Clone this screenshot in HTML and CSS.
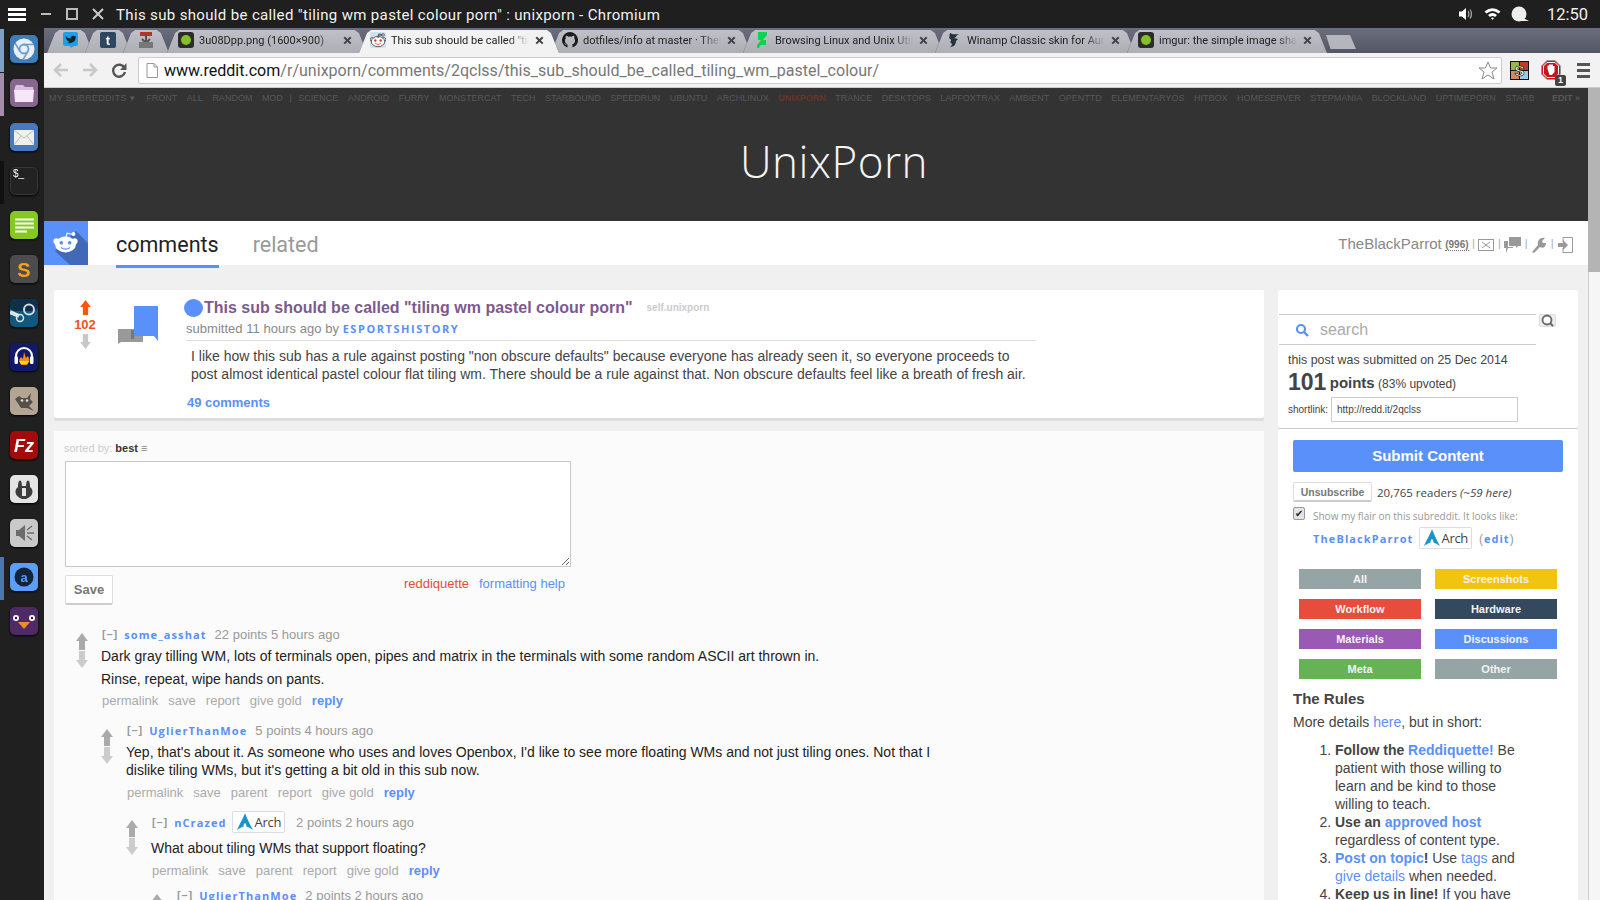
FILE: index.html
```html
<!DOCTYPE html>
<html lang="en">
  <head>
    <meta charset="utf-8">
    <link rel="stylesheet" href="styles.css">
    <title>This sub should be called "tiling wm pastel colour porn" : unixporn - Chromium</title>
  </head>
  <body>
    <svg class="defs" width="0" height="0">
      <symbol id="up" viewBox="0 0 12 17"><path d="M6 0 12 8H9V17H3V8H0Z"/></symbol>
      <symbol id="down" viewBox="0 0 12 17"><path d="M3 0H9V9H12L6 17 0 9H3Z"/></symbol>
      <symbol id="arch" viewBox="0 0 20 20"><path d="M10 0C9 3 7.500 6 1 19 4 17 6.500 15.500 8.500 15 8 10 12 10 11.500 15 13.500 15.500 16 17 19 19 14 10 12 5 10 0Z"/></symbol>
      <symbol id="alien" viewBox="0 0 30 26">
        <circle cx="4" cy="12" r="3.500"/><circle cx="26" cy="12" r="3.500"/>
        <ellipse cx="15" cy="16" rx="12.500" ry="9.500"/>
        <path d="M14.500 8 16.500 1.500 22.500 3 22.300 4.300 17.500 3.200 15.800 8Z"/>
        <circle cx="24.500" cy="3.500" r="2.400"/>
        <circle cx="10" cy="14" r="2.200" fill="currentColor" stroke="none"/><circle cx="20" cy="14" r="2.200" fill="currentColor" stroke="none"/>
        <path d="M9.500 19.500Q15 23.500 20.500 19.500" fill="none" stroke="currentColor" stroke-width="1.400"/>
      </symbol>
    </svg>

    <header class="topbar">
      <div class="hamburger"><i></i><i></i><i></i></div>
      <div class="win-buttons">
        <svg width="12" height="12" viewBox="0 0 12 12"><path d="M1 6H11" stroke="#bbb" stroke-width="2"/></svg>
        <svg width="12" height="12" viewBox="0 0 12 12"><rect x="1" y="1" width="10" height="10" fill="none" stroke="#bbb" stroke-width="2"/></svg>
        <svg width="12" height="12" viewBox="0 0 12 12"><path d="M1 1 11 11M11 1 1 11" stroke="#ccc" stroke-width="2"/></svg>
      </div>
      <div class="win-title">This sub should be called "tiling wm pastel colour porn" : unixporn - Chromium</div>
      <div class="tray">
        <svg width="16" height="16" viewBox="0 0 16 16"><path d="M1 5.500H4L8 2V14L4 10.500H1Z" fill="#fff"/><path d="M10 5Q12 8 10 11M12 3.500Q15 8 12 12.500" fill="none" stroke="#aaa" stroke-width="1.200"/></svg>
        <svg width="17" height="14" viewBox="0 0 17 14"><path d="M0.500 4.500Q8.500 -2 16.500 4.500L14.500 6.500Q8.500 1.500 2.500 6.500ZM4 8Q8.500 4 13 8L11 10Q8.500 8 6 10ZM7 11Q8.500 10 10 11L8.500 13Z" fill="#fff"/></svg>
        <svg width="18" height="16" viewBox="0 0 18 16"><circle cx="8" cy="8" r="7.500" fill="#eee"/><path d="M12 12 18 15H9Z" fill="#eee"/></svg>
        <span class="clock">12:50</span>
      </div>
    </header>

    <div class="desktop">
      <nav class="launcher">
        <div class="launch-item open-blue"><svg width="28" height="28" viewBox="0 0 28 28"><rect width="28" height="28" rx="5" fill="#3d7db8"/><circle cx="14" cy="14" r="10.500" fill="#e8eff6"/><circle cx="14" cy="14" r="4.500" fill="#e8eff6" stroke="#6f9cc8" stroke-width="1.800"/><path d="M14 9.500H24M10 16.500 5 8M18 16.500 13 24.500" stroke="#6f9cc8" stroke-width="1.500"/></svg></div>
        <div class="launch-item open-purple"><svg width="28" height="28" viewBox="0 0 28 28"><rect width="28" height="28" rx="5" fill="#86668e"/><path d="M5 8 6 6H13L15 8H23L24 13H4Z" fill="#d8bede"/><path d="M4 11H24L23 23H5Z" fill="#f6e6f8"/></svg></div>
        <div class="launch-item"><svg width="28" height="28" viewBox="0 0 28 28"><rect width="28" height="28" rx="5" fill="#4878bd"/><rect x="4" y="7" width="20" height="15" fill="#f0f0ea"/><path d="M4 7 14 15 24 7M4 22 11 13M24 22 17 13" fill="none" stroke="#bbb"/></svg></div>
        <div class="launch-item open-dark"><svg width="28" height="28" viewBox="0 0 28 28"><rect x=".5" y=".5" width="27" height="27" rx="5" fill="#222" stroke="#383838"/><text x="3" y="10" class="icon-text" font-size="10" fill="#fff">$_</text></svg></div>
        <div class="launch-item"><svg width="28" height="28" viewBox="0 0 28 28"><rect width="28" height="28" rx="5" fill="#86c820"/><path d="M5 8.500H24M5 12.500H24M5 16.500H24M5 20.500H17" stroke="#fff" stroke-width="2"/></svg></div>
        <div class="launch-item"><svg width="28" height="28" viewBox="0 0 28 28"><rect width="28" height="28" rx="5" fill="#4c4c4c"/><text x="14" y="22" text-anchor="middle" class="icon-text bold" font-size="20" fill="#f7a21c">S</text></svg></div>
        <div class="launch-item"><svg width="28" height="28" viewBox="0 0 28 28"><rect width="28" height="28" rx="5" fill="#10587e"/><rect width="28" height="12" rx="5" fill="#0f2f48"/><circle cx="19" cy="10.500" r="5" fill="none" stroke="#cfd8dd" stroke-width="2"/><path d="M0 13 9 17" stroke="#dfe6ea" stroke-width="4"/><circle cx="10" cy="19" r="3.500" fill="none" stroke="#dfe6ea" stroke-width="1.500"/></svg></div>
        <div class="launch-item"><svg width="28" height="28" viewBox="0 0 28 28"><rect width="28" height="28" rx="5" fill="#111a66"/><path d="M6 19V13A8 8 0 0 1 22 13V19" fill="none" stroke="#fff" stroke-width="2"/><rect x="4.500" y="13" width="3.500" height="8" rx="1.500" fill="#fff"/><rect x="20" y="13" width="3.500" height="8" rx="1.500" fill="#fff"/><path d="M9 17 11 14 13 16 14 9 16 15 18 13 19.500 17 17 22H11Z" fill="#f58a12"/><path d="M9 18H19.500L17 21H11Z" fill="#f7d81c"/></svg></div>
        <div class="launch-item"><svg width="28" height="28" viewBox="0 0 28 28"><rect width="28" height="28" rx="5" fill="#b3a593"/><path d="M5 12 9 9 12 11H17L21 6 20 12 23 15 19 19 24 24 17 21H11L7 15Z" fill="#56504a"/><circle cx="12" cy="13.500" r="1.300" fill="#ddd"/><circle cx="17" cy="13.500" r="1.300" fill="#ddd"/></svg></div>
        <div class="launch-item"><svg width="28" height="28" viewBox="0 0 28 28"><rect width="28" height="28" rx="5" fill="#a30b0b"/><text x="14" y="21" text-anchor="middle" class="icon-text bold italic" font-size="18" fill="#fff">Fz</text></svg></div>
        <div class="launch-item"><svg width="28" height="28" viewBox="0 0 28 28"><rect width="28" height="28" rx="5" fill="#e4e4e4"/><path d="M9 6C11 4 12 8 12 11H16C16 8 17 4 19 6 20 8 20 10 20 12 25 16 22 22 16 24H12C6 22 3 16 8 12 8 10 8 8 9 6Z" fill="#3c3c3c"/><path d="M12 13H16V21H12Z" fill="#e4e4e4"/></svg></div>
        <div class="launch-item"><svg width="28" height="28" viewBox="0 0 28 28"><rect width="28" height="28" rx="5" fill="#c9c9c9"/><path d="M6 11H9L15 6V22L9 17H6Z" fill="#6c6c6c"/><path d="M17 14H24M17 11 22 7M17 17 22 21" stroke="#6c6c6c" stroke-width="1.500"/></svg></div>
        <div class="launch-item open-blue2"><svg width="28" height="28" viewBox="0 0 28 28"><rect width="28" height="28" rx="5" fill="#5a9ef5"/><circle cx="14" cy="14" r="9.500" fill="#12233a"/><text x="14" y="18.500" text-anchor="middle" class="icon-text bold" font-size="13" fill="#5a9ef5">a</text></svg></div>
        <div class="launch-item"><svg width="28" height="28" viewBox="0 0 28 28"><rect width="28" height="28" rx="5" fill="#4e2a66"/><circle cx="6" cy="11" r="3" fill="#fff"/><circle cx="22" cy="11" r="3" fill="#fff"/><circle cx="6" cy="11" r="1.200" fill="#222"/><circle cx="22" cy="11" r="1.200" fill="#222"/><path d="M8 15H20L14 22Z" fill="#ef8b2b"/></svg></div>
      </nav>

      <main class="browser">
        <div class="tabstrip">
          <div class="tab pinned"><svg width="15" height="16" viewBox="0 0 15 16"><rect width="15" height="14" rx="2" fill="#1ba1e8"/><path d="M7 14H11L7.500 16Z" fill="#1ba1e8"/><path d="M2.500 4Q5 6.500 7.500 6.500C7.500 3.500 10.500 3 12 4.500L13 4 12.500 6C12.500 9.500 9 12 4 11 5 10.900 6 10.500 6.500 10 4 9 3 7 2.500 4Z" fill="#10202c"/></svg></div>
          <div class="tab pinned"><svg width="16" height="16" viewBox="0 0 16 16"><rect width="16" height="16" rx="2" fill="#2c4762"/><text x="8" y="13" text-anchor="middle" class="icon-text bold" font-size="13" fill="#fff">t</text></svg></div>
          <div class="tab pinned"><svg width="16" height="16" viewBox="0 0 16 16"><rect x="2" y="0" width="12" height="4" fill="#b5342a"/><path d="M8 3V10M4 7 8 11 12 7" fill="none" stroke="#555" stroke-width="2"/><rect x="1" y="10" width="14" height="6" fill="#777"/></svg></div>
          <div class="tab first-full"><svg class="fav" width="16" height="16" viewBox="0 0 16 16"><rect width="16" height="16" rx="3" fill="#2b2b2b"/><circle cx="8" cy="8" r="5" fill="#85bf25"/></svg><span class="tab-title">3u08Dpp.png (1600×900)</span><span class="tab-x">×</span></div>
          <div class="tab active"><svg class="fav alien-fav" width="16" height="16"><use href="#alien"/></svg><span class="tab-title">This sub should be called "tiling wm pastel colour porn"</span><span class="tab-x">×</span></div>
          <div class="tab"><svg class="fav" width="16" height="16" viewBox="0 0 16 16"><path d="M8 0A8 8 0 0 0 5.500 15.600V13C3 13.500 3 11.700 2 11.300 3 11 3.800 12 4.200 12.500 5 13 5.500 12.700 5.700 12.300 3.500 12 3 10.500 3 8.500 3 7.500 3.300 6.800 3.800 6.200 3.500 5.500 3.600 4.500 4 3.800 5 3.800 5.800 4.300 6.200 4.700A7 7 0 0 1 9.800 4.700C10.200 4.300 11 3.800 12 3.800 12.400 4.500 12.500 5.500 12.200 6.200 12.700 6.800 13 7.500 13 8.500 13 10.500 12.500 12 10.300 12.300 10.500 12.700 10.500 13 10.500 14V15.600A8 8 0 0 0 8 0Z" fill="#1b1b1b"/></svg><span class="tab-title">dotfiles/info at master · TheBlackParrot/dotfiles</span><span class="tab-x">×</span></div>
          <div class="tab"><svg class="fav" width="16" height="16" viewBox="0 0 16 16"><path d="M4 0H13V3L9 8H12V13H7L5 16H3V13L7 8H4Z" fill="#0ad452"/></svg><span class="tab-title">Browsing Linux and Unix Utilities</span><span class="tab-x">×</span></div>
          <div class="tab"><svg class="fav" width="16" height="16" viewBox="0 0 16 16"><path d="M4 1C7 3 9 2 13 2 11 3 10 4 10 5L8 6 12 7 10 9C10 12 8 15 4 15 7 13 6 11 4 10 6 9 5 7 3 6 4 5 3 3 4 1Z" fill="#23343c"/></svg><span class="tab-title">Winamp Classic skin for Audacious</span><span class="tab-x">×</span></div>
          <div class="tab"><svg class="fav" width="16" height="16" viewBox="0 0 16 16"><rect width="16" height="16" rx="3" fill="#2b2b2b"/><circle cx="8" cy="8" r="5" fill="#85bf25"/></svg><span class="tab-title">imgur: the simple image sharer</span><span class="tab-x">×</span></div>
          <div class="newtab"></div>
        </div>

        <div class="toolbar">
          <svg class="tool-ico" width="16" height="16" viewBox="0 0 16 16"><path d="M15 8H2M8 2 2 8 8 14" fill="none" stroke="#c8c8c8" stroke-width="2.500"/></svg>
          <svg class="tool-ico" width="16" height="16" viewBox="0 0 16 16"><path d="M1 8H14M8 2 14 8 8 14" fill="none" stroke="#c8c8c8" stroke-width="2.500"/></svg>
          <svg class="tool-ico" width="16" height="16" viewBox="0 0 16 16"><path d="M13.500 6A6 6 0 1 0 14 10" fill="none" stroke="#555" stroke-width="2.400"/><path d="M15.500 1V8H9Z" fill="#555"/></svg>
          <div class="omnibox">
            <svg width="12" height="15" viewBox="0 0 12 15"><path d="M1 .5H8L11.500 4V14.500H1ZM8 .5V4H11.500" fill="#fff" stroke="#999"/></svg>
            <div class="url"><b>www.reddit.com</b>/r/unixporn/comments/2qclss/this_sub_should_be_called_tiling_wm_pastel_colour/</div>
            <svg width="20" height="19" viewBox="0 0 20 19"><path d="M10 1 12.600 7H19L14 11 16 18 10 14 4 18 6 11 1 7H7.400Z" fill="#fff" stroke="#888"/></svg>
          </div>
          <div class="ext-icons">
            <svg width="19" height="19" viewBox="0 0 19 19"><rect width="19" height="19" fill="#111"/><rect x="1" y="1" width="8" height="8" fill="#9ab34c"/><rect x="10" y="1" width="8" height="8" fill="#c03a2b"/><rect x="1" y="10" width="8" height="8" fill="#c98a66"/><rect x="10" y="10" width="8" height="8" fill="#9ec9e6"/><text x="9.500" y="15" text-anchor="middle" class="icon-text bold" font-size="15" fill="#fff" stroke="#000" stroke-width=".6">S</text></svg>
            <div class="abp">
              <svg width="20" height="20" viewBox="0 0 20 20"><path d="M6 .5H14L19.500 6V14L14 19.500H6L.5 14V6Z" fill="#c4161c" stroke="#999"/><path d="M6 2.500H14L17.500 6V14L14 17.500H6L2.500 14V6Z" fill="none" stroke="#fff"/><path d="M6.500 9V5.500H8V4.500H12V6H13.500V12L11 15H8.500Z" fill="#fff"/></svg>
              <span class="abp-badge">1</span>
            </div>
            <div class="chrome-menu"><i></i><i></i><i></i></div>
          </div>
        </div>

        <div class="viewport">
          <div class="page">
            <div class="sr-header">
              <div class="sr-bar">
                <div class="sr-list">
                  <span class="sr-drop">My Subreddits ▾</span>
                  <span>Front</span><span>All</span><span>Random</span><span>Mod</span><span class="sr-sep">|</span>
                  <span>Science</span><span>Android</span><span>Furry</span><span>Monstercat</span><span>Tech</span><span>Starbound</span><span>Speedrun</span><span>Ubuntu</span><span>Archlinux</span><span class="sr-current">Unixporn</span><span>Trance</span><span>Desktops</span><span>Lapfoxtrax</span><span>Ambient</span><span>OpenTTD</span><span>Elementaryos</span><span>Hitbox</span><span>Homeserver</span><span>Stepmania</span><span>Blockland</span><span>Uptimeporn</span><span>Starbound</span>
                </div>
                <span class="sr-edit">Edit »</span>
              </div>
              <h1 class="sr-title">UnixPorn</h1>
            </div>

            <div class="tabmenu">
              <div class="logo">
                <svg width="44" height="44" viewBox="0 0 44 44"><path d="M32 10 44 22V44H26L11 30Z" fill="#4169b8"/><svg class="logo-alien" x="9" y="10" width="25" height="22"><use href="#alien"/></svg></svg>
              </div>
              <a class="menu-tab selected">comments</a>
              <a class="menu-tab">related</a>
              <div class="userbox">
                <span class="username">TheBlackParrot</span>
                <span class="karma">(996)</span>
                <span class="sep">|</span>
                <svg width="16" height="12" viewBox="0 0 16 12"><rect x=".5" y=".5" width="15" height="11" fill="none" stroke="#999"/><path d="M4 3 8 6 12 3M4 9 8 6 12 9" fill="none" stroke="#999"/></svg>
                <span class="sep">|</span>
                <svg width="17" height="16" viewBox="0 0 17 16"><path d="M5 0H17V9H14L12 11V9H5Z" fill="#999"/><path d="M0 4H4V10H9V11H4L2 16V11H0Z" fill="#999"/></svg>
                <span class="sep">|</span>
                <svg width="16" height="16" viewBox="0 0 16 16"><path d="M1 15 7 8C6 4 9 0 14 1L11 4 12 6 15 6C15 10 12 12 9 10L3 16Z" fill="#999"/></svg>
                <span class="sep">|</span>
                <svg width="16" height="16" viewBox="0 0 16 16"><path d="M6 .5H15.500V15.500H6V11M6 5V.5" fill="none" stroke="#999"/><path d="M1 6H6V3L11 8 6 13V10H1Z" fill="#999"/></svg>
              </div>
            </div>

            <div class="columns">
              <div class="main-col">
                <section class="post">
                  <div class="post-votes">
                    <svg class="post-arrow" width="13" height="15"><use href="#up"/></svg>
                    <span class="score">102</span>
                    <svg class="post-arrow off" width="13" height="15"><use href="#down"/></svg>
                  </div>
                  <div class="post-thumb">
                    <svg width="40" height="36" viewBox="0 0 40 36"><path d="M0 24H25V37H3L0 39Z" fill="#999" transform="translate(0 -1)"/><rect x="13" y="24" width="3" height="9" fill="#777"/><path d="M16 0H40V35L36 30H16Z" fill="#5a90fa"/></svg>
                  </div>
                  <div class="post-entry">
                    <div class="post-title"><i class="dot"></i><a class="title-link">This sub should be called "tiling wm pastel colour porn"</a><span class="domain">self.unixporn</span></div>
                    <div class="tagline">submitted 11 hours ago by <a class="author">EsportsHistory</a></div>
                    <div class="selftext">I like how this sub has a rule against posting "non obscure defaults" because everyone has already seen it, so everyone proceeds to post almost identical pastel colour flat tiling wm. There should be a rule against that. Non obscure defaults feel like a breath of fresh air.</div>
                    <a class="comment-count">49 comments</a>
                  </div>
                </section>

                <section class="commentarea">
                  <div class="sorted">sorted by: <b>best</b> <span class="sort-ico">≡</span></div>
                  <div class="reply-form">
                    <div class="fake-textarea"><svg width="9" height="9" viewBox="0 0 9 9"><path d="M1 8 8 1M5 8 8 5" stroke="#666"/></svg></div>
                    <div class="reply-row">
                      <button class="save-btn">Save</button>
                      <div class="reply-links"><a class="red">reddiquette</a><a class="blue">formatting help</a></div>
                    </div>
                  </div>

                  <div class="comment">
                    <div class="c-votes"><svg class="c-up" width="12" height="17"><use href="#up"/></svg><svg class="c-down" width="12" height="17"><use href="#down"/></svg></div>
                    <div class="c-entry">
                      <div class="c-tag"><span class="toggle">[–]</span><a class="c-author">some_asshat</a><span class="c-meta">22 points 5 hours ago</span></div>
                      <p>Dark gray tilling WM, lots of terminals open, pipes and matrix in the terminals with some random ASCII art thrown in.</p>
                      <p class="next">Rinse, repeat, wipe hands on pants.</p>
                      <div class="c-btns"><span>permalink</span><span>save</span><span>report</span><span>give gold</span><a class="reply">reply</a></div>
                    </div>
                    <div class="c-children">
                      <div class="comment">
                        <div class="c-votes"><svg class="c-up" width="12" height="17"><use href="#up"/></svg><svg class="c-down" width="12" height="17"><use href="#down"/></svg></div>
                        <div class="c-entry">
                          <div class="c-tag"><span class="toggle">[–]</span><a class="c-author">UglierThanMoe</a><span class="c-meta">5 points 4 hours ago</span></div>
                          <p>Yep, that's about it. As someone who uses and loves Openbox, I'd like to see more floating WMs and not just tiling ones. Not that I dislike tiling WMs, but it's getting a bit old in this sub now.</p>
                          <div class="c-btns"><span>permalink</span><span>save</span><span>parent</span><span>report</span><span>give gold</span><a class="reply">reply</a></div>
                        </div>
                        <div class="c-children">
                          <div class="comment tight">
                            <div class="c-votes"><svg class="c-up" width="12" height="17"><use href="#up"/></svg><svg class="c-down" width="12" height="17"><use href="#down"/></svg></div>
                            <div class="c-entry">
                              <div class="c-tag has-flair"><span class="toggle">[–]</span><a class="c-author">nCrazed</a><span class="flair"><svg width="18" height="18"><use href="#arch"/></svg>Arch</span><span class="c-meta">2 points 2 hours ago</span></div>
                              <p>What about tiling WMs that support floating?</p>
                              <div class="c-btns"><span>permalink</span><span>save</span><span>parent</span><span>report</span><span>give gold</span><a class="reply">reply</a></div>
                            </div>
                            <div class="c-children">
                              <div class="comment tighter">
                                <div class="c-votes"><svg class="c-up" width="12" height="17"><use href="#up"/></svg><svg class="c-down" width="12" height="17"><use href="#down"/></svg></div>
                                <div class="c-entry">
                                  <div class="c-tag"><span class="toggle">[–]</span><a class="c-author">UglierThanMoe</a><span class="c-meta">2 points 2 hours ago</span></div>
                                </div>
                              </div>
                            </div>
                          </div>
                        </div>
                      </div>
                    </div>
                  </div>
                </section>
              </div>

              <aside class="side-col">
                <section class="side-info">
                  <div class="search-row">
                    <div class="search">
                      <svg width="14" height="14" viewBox="0 0 14 14"><circle cx="6" cy="6" r="4" fill="none" stroke="#5a90fa" stroke-width="2.200"/><path d="M9 9 13 13" stroke="#5a90fa" stroke-width="2.400"/></svg>
                      <span>search</span>
                    </div>
                    <div class="search-btn"><svg width="13" height="13" viewBox="0 0 13 13"><circle cx="6" cy="6" r="4.500" fill="#fff" stroke="#666" stroke-width="1.800"/><path d="M9 9 12 12" stroke="#666" stroke-width="2"/></svg></div>
                  </div>
                  <div class="linkinfo">this post was submitted on 25 Dec 2014</div>
                  <div class="points"><b class="big">101</b> <b class="pts">points</b> (83% upvoted)</div>
                  <div class="shortlink">shortlink: <span class="short-input">http://redd.it/2qclss</span></div>
                </section>

                <section class="side-main">
                  <a class="submit">Submit Content</a>
                  <div class="sub-row"><button class="unsub">Unsubscribe</button><span>20,765 readers <i>(~59 here)</i></span></div>
                  <div class="flair-row"><span class="check">✔</span><span>Show my flair on this subreddit. It looks like:</span></div>
                  <div class="flair-user"><a class="c-author">TheBlackParrot</a><span class="flair"><svg width="18" height="18"><use href="#arch"/></svg>Arch</span><span class="edit">(<a>edit</a>)</span></div>
                  <div class="filters">
                    <a class="grey">All</a><a class="yellow">Screenshots</a>
                    <a class="redbg">Workflow</a><a class="navy">Hardware</a>
                    <a class="purple">Materials</a><a class="bluebg">Discussions</a>
                    <a class="green">Meta</a><a class="grey">Other</a>
                  </div>
                  <h3 class="rules-h">The Rules</h3>
                  <p class="rules-p">More details <a>here</a>, but in short:</p>
                  <ol class="rules">
                    <li><b>Follow the <a>Reddiquette!</a></b> Be patient with those willing to learn and be kind to those willing to teach.</li>
                    <li><b>Use an <a>approved host</a></b> regardless of content type.</li>
                    <li><b><a>Post on topic</a>!</b> Use <a>tags</a> and <a>give details</a> when needed.</li>
                    <li><b>Keep us in line!</b> If you have</li>
                  </ol>
                </section>
              </aside>
            </div>
          </div>
          <div class="scrollbar"><div class="thumb"></div></div>
        </div>
      </main>
    </div>
  </body>
</html>
```

FILE: styles.css
```css
* { box-sizing: border-box; }
html, body { margin: 0; height: 100%; overflow: hidden; }
body {
  font-family: "Liberation Sans", Arial, sans-serif;
  background: #1f1f1f;
  display: flex;
  flex-direction: column;
  height: 900px;
}
a { cursor: pointer; }
.defs { position: absolute; }
.icon-text { font-family: "Liberation Sans", sans-serif; }
.icon-text.bold { font-weight: bold; }
.icon-text.italic { font-style: italic; }

/* window manager bar */
.topbar {
  height: 28px;
  flex: none;
  display: flex;
  align-items: center;
  background: #1f1f1f;
  color: #fff;
}
.hamburger { width: 18px; margin-left: 8px; display: flex; flex-direction: column; gap: 2px; }
.hamburger i { height: 3px; background: #fff; display: block; }
.win-buttons { display: flex; gap: 14px; margin-left: 14px; }
.win-title {
  margin-left: 12px;
  padding-top: 1px;
  font-family: Roboto, sans-serif;
  font-size: 15px;
  letter-spacing: .35px;
  color: #f2f2f2;
  white-space: nowrap;
}
.tray { margin-left: auto; display: flex; align-items: center; gap: 10px; padding-right: 12px; }
.clock { font-family: Roboto, sans-serif; font-size: 16.500px; margin-left: 8px; color: #eee; }

/* dock */
.desktop { flex: 1; display: flex; min-height: 0; }
.launcher {
  width: 44px;
  flex: none;
  padding-top: 7px;
  display: flex;
  flex-direction: column;
  gap: 16px;
  background: #202020;
}
.launch-item { height: 28px; padding-left: 10px; position: relative; }
.launch-item svg { display: block; filter: drop-shadow(0 1px 1px #000); }
.launch-item::before { content: ""; position: absolute; left: 0; top: -6px; width: 4px; height: 43px; }
.open-blue::before { background: #7f9fc8; }
.open-purple::before { background: #a48dab; }
.open-dark::before { background: #111; }
.open-blue2::before { background: #4a76ae; }

/* browser chrome */
.browser { flex: 1; min-width: 0; display: flex; flex-direction: column; }
.tabstrip {
  height: 25px;
  flex: none;
  display: flex;
  align-items: stretch;
  padding: 2px 0 0 3px;
  background: linear-gradient(#6a6e7e, #535664);
  position: relative;
}
.tab {
  width: 200px;
  margin-left: -8px;
  padding: 0 15px 3px 11px;
  display: flex;
  align-items: center;
  position: relative;
  font-family: Roboto, sans-serif;
  font-size: 11px;
  color: #222;
  filter: drop-shadow(0 0 .6px #3c3e48);
}
.tab::before {
  content: "";
  position: absolute;
  z-index: -1;
  inset: 0;
  background: linear-gradient(#bfc0c8, #acadb5);
  clip-path: polygon(0 100%, 8px 3px, 12px 0, calc(100% - 12px) 0, calc(100% - 8px) 3px, 100% 100%);
}
.tab.pinned { width: 46px; padding: 0 0 3px; justify-content: center; }
.tab.pinned:first-child { margin-left: 0; }
.tab.first-full { margin-left: -2px; }
.tab.active { z-index: 2; color: #222; }
.tab.active::before { background: #f2f2f2; }
.fav { flex: none; margin-right: 5px; display: block; }
.alien-fav { color: #d8391d; fill: #fff; stroke: #222; stroke-width: 1.300; background: #cfe0f0; border-radius: 2px; }
.tab-title {
  flex: 1;
  min-width: 0;
  overflow: hidden;
  white-space: nowrap;
  -webkit-mask-image: linear-gradient(to right, #000 85%, transparent);
  mask-image: linear-gradient(to right, #000 85%, transparent);
}
.tab-x { margin-left: 6px; font-size: 17px; font-weight: bold; color: #444; line-height: 1; }
.newtab {
  width: 30px;
  height: 14px;
  margin: 5px 0 0 -1px;
  background: #b4b5bd;
  clip-path: polygon(0 0, 80% 0, 100% 100%, 15% 100%);
}
.toolbar {
  height: 35px;
  flex: none;
  display: flex;
  align-items: center;
  padding-left: 9px;
  background: #f2f2f2;
  border-bottom: 1px solid #ccc;
}
.tool-ico { margin-right: 13px; flex: none; }
.omnibox {
  width: 1364px;
  height: 27px;
  margin-left: -2px;
  flex: none;
  display: flex;
  align-items: center;
  padding: 0 3px 0 7px;
  background: #fff;
  border: 1px solid #ccc;
  border-radius: 2px;
}
.url {
  flex: 1;
  margin-left: 6px;
  font-family: Roboto, sans-serif;
  font-size: 16.060px;
  color: #777;
  white-space: nowrap;
}
.url b { font-weight: normal; color: #111; }
.ext-icons { display: flex; align-items: center; margin-left: 8px; }
.ext-icons svg { display: block; }
.abp { margin-left: 12px; position: relative; }
.abp-badge {
  position: absolute;
  right: -5px;
  bottom: -6px;
  width: 11px;
  height: 11px;
  background: #444;
  color: #fff;
  border-radius: 2px;
  font-size: 9px;
  font-weight: bold;
  line-height: 11px;
  text-align: center;
}
.chrome-menu { margin-left: 16px; width: 13px; display: flex; flex-direction: column; gap: 3px; }
.chrome-menu i { height: 3px; background: #555; display: block; }

/* page */
.viewport { flex: 1; min-height: 0; display: flex; background: #f0f0f0; }
.page { flex: 1; min-width: 0; overflow: hidden; }
.scrollbar { width: 12px; flex: none; background: #f6f6f6; border-left: 1px solid #ccc; }
.thumb { height: 184px; margin-left: -1px; background: #b4b4b4; }

.sr-header { height: 133px; background: #333; }
.sr-bar {
  height: 20px;
  display: flex;
  align-items: center;
  padding: 0 8px 0 5px;
  font-size: 9px;
  text-transform: uppercase;
  color: #585858;
}
.sr-list { flex: 1; min-width: 0; display: flex; gap: 9.500px; overflow: hidden; white-space: nowrap; }
.sr-drop { margin-right: 2px; letter-spacing: .3px; }
.sr-sep { margin: 0 -3px; }
.sr-current { color: #6b3424; font-weight: bold; }
.sr-edit { margin-left: 18px; font-weight: bold; }
.sr-title {
  margin: 28px 0 0;
  padding-left: 36px;
  text-align: center;
  font-family: "Open Sans", sans-serif;
  font-weight: 300;
  font-size: 44px;
  line-height: 50px;
  letter-spacing: .5px;
  color: #f4f4f4;
}

.tabmenu { height: 44px; display: flex; background: #fff; position: relative; }
.logo { width: 44px; height: 44px; flex: none; background: #5a90fa; overflow: hidden; }
.logo svg { display: block; }
.logo-alien { fill: #fff; color: #5a90fa; }
.menu-tab {
  margin-left: 28px;
  height: 47px;
  font-family: Roboto, sans-serif;
  font-size: 21.500px;
  line-height: 47px;
  color: #999;
  margin-right: 6px;
}
.menu-tab.selected { color: #222; border-bottom: 3px solid #5a90fa; }
.userbox {
  margin-left: auto;
  padding-right: 15px;
  display: flex;
  align-items: center;
  gap: 3.500px;
  font-size: 15px;
  color: #888;
}
.userbox svg { margin-top: 3px; }
.karma { margin-top: 3px; font-size: 10px; font-weight: bold; border-bottom: 1px dotted #777; color: #777; }
.sep { font-size: 11px; color: #aaa; }

.columns { display: flex; gap: 14px; padding: 25px 10px 0; }
.main-col { width: 1210px; flex: none; }
.side-col { width: 300px; flex: none; }

.post {
  height: 128px;
  display: flex;
  background: #fff;
  box-shadow: 0 3px 0 #ddd;
  border-radius: 2px;
}
.post-votes { width: 62px; flex: none; padding-top: 10px; display: flex; flex-direction: column; align-items: center; }
.post-arrow { fill: #ff5700; display: block; }
.post-arrow.off { fill: #c8c8c8; }
.score { font-size: 13px; font-weight: bold; color: #f4511e; line-height: 17px; margin: 1px 0; }
.post-thumb { width: 68px; flex: none; padding: 16px 0 0 2px; }
.post-thumb svg { display: block; overflow: visible; }
.post-entry { flex: 1; min-width: 0; }
.post-title { margin-top: 8px; height: 19px; display: flex; align-items: center; white-space: nowrap; }
.dot { width: 19px; height: 18px; border-radius: 50%; background: #5a90fa; display: block; flex: none; }
.title-link { margin-left: 1px; font-size: 16px; font-weight: bold; color: #7d5a8c; }
.domain { margin-left: 14px; font-size: 10px; font-weight: bold; color: #ccc; }
.tagline { margin: 3px 0 0 2px; width: 850px; height: 21px; font-size: 13px; letter-spacing: .03px; line-height: 17px; color: #888; border-bottom: 1px solid #ddd; }
.author { font-family: "Open Sans", sans-serif; font-size: 11px; font-weight: bold; letter-spacing: 1.550px; text-transform: uppercase; color: #5a90fa; }
.selftext { width: 845px; margin: 6px 0 0 7px; font-size: 14px; line-height: 18px; color: #444; }
.comment-count { display: block; margin: 12px 0 0 3px; font-size: 13px; font-weight: bold; color: #5a90fa; }

.commentarea { margin-top: 13px; padding: 9px 0 0 10px; height: 480px; background: #fbfbfb; overflow: hidden; }
.sorted { font-size: 11px; line-height: 16px; color: #ccc; }
.sorted b { color: #333; }
.sort-ico { color: #888; }
.reply-form { width: 506px; margin: 5px 0 0 1px; }
.fake-textarea {
  height: 106px;
  background: #fff;
  border: 1px solid #c8c8c8;
  display: flex;
  align-items: flex-end;
  justify-content: flex-end;
}
.fake-textarea svg { display: block; }
.reply-row { display: flex; justify-content: space-between; margin-top: 8px; }
.save-btn {
  width: 48px;
  height: 30px;
  padding: 0;
  font: bold 13px "Liberation Sans", sans-serif;
  color: #777;
  background: #fff;
  border: 1px solid #ddd;
  border-bottom: 2px solid #ccc;
  border-radius: 2px;
}
.reply-links { display: flex; gap: 10px; padding: 1px 6px 0 0; font-size: 13px; line-height: 16px; }
.red { color: #e74c3c; }
.blue { color: #5a90fa; }

.commentarea > .comment { margin: 19px 0 0 12px; }
.comment { display: grid; grid-template-columns: 25px 1fr; }
.c-children { grid-column: 1 / 3; }
.c-children > .comment { margin: 10px 0 0 25px; }
.c-children > .comment.tight { margin-top: 9px; }
.c-children > .comment.tighter { margin-top: 5px; }
.c-votes { padding-top: 9px; }
.c-votes svg { display: block; }
.c-up { fill: #aaa; }
.c-down { fill: #ccc; margin-top: 1px; }
.c-tag { display: flex; align-items: center; height: 20px; white-space: nowrap; }
.c-tag.has-flair { height: 22px; margin-bottom: 6px; }
.toggle { font-size: 11px; font-weight: bold; color: #999; margin: 0 6px 0 1px; letter-spacing: .9px; }
.c-author { font-family: "Open Sans", sans-serif; font-size: 11px; font-weight: bold; letter-spacing: 1.100px; color: #5a90fa; }
.c-meta { margin-left: 8px; font-size: 13px; color: #999; }
.flair {
  display: inline-flex;
  align-items: center;
  gap: 1px;
  height: 22px;
  padding: 0 3px;
  margin-left: 5px;
  border: 1px solid #ddd;
  border-radius: 2px;
  background: #fff;
  font-family: "Open Sans", sans-serif;
  font-size: 13px;
  letter-spacing: -.3px;
  color: #444;
  fill: #1793d1;
}
.c-tag .flair + .c-meta { margin-left: 11px; }
.c-entry p { margin: 3px 0 0; max-width: 825px; font-size: 14px; line-height: 18px; color: #222; }
.c-entry p.next { margin-top: 5px; }
.c-btns { display: flex; gap: 10px; margin: 4px 0 0 1px; font-size: 13px; line-height: 18px; color: #aaa; }
.c-children .c-btns { margin-top: 5px; }
.reply { font-weight: bold; color: #5a90fa; }

.side-info { height: 138px; background: #fff; border-radius: 2px; box-shadow: 0 1px 0 #ccc; padding-top: 24px; }
.search-row { display: flex; align-items: flex-start; }
.search {
  width: 257px;
  height: 31px;
  margin-left: 1px;
  border-top: 1px solid #ccc;
  border-bottom: 1px solid #ccc;
  display: flex;
  align-items: center;
  gap: 11px;
  padding-left: 16px;
  font-size: 16px;
  color: #aaa;
}
.search-btn { width: 17px; height: 13px; margin-left: 3px; background: #eee; border: 1px solid #ddd; border-radius: 2px; }
.search-btn svg { display: block; margin: -1px 0 0 1px; }
.linkinfo { margin: 0 0 0 10px; padding-top: 8px; font-size: 12.400px; line-height: 14px; color: #444; }
.points { margin: 2px 0 0 10px; font-size: 12px; line-height: 26px; color: #444; }
.big { font-size: 23px; vertical-align: -2px; }
.pts { font-size: 15px; }
.shortlink { margin: 0 0 0 10px; display: flex; align-items: center; gap: 3px; font-size: 10px; color: #444; }
.short-input { width: 187px; height: 25px; line-height: 23px; padding-left: 5px; border: 1px solid #ccc; }

.side-main { margin-top: 1px; padding: 11px 15px 0; background: #fff; height: 500px; color: #444; overflow: hidden; }
.submit {
  display: block;
  height: 32px;
  background: #5a90fa;
  border-radius: 2px;
  color: #fff;
  font-size: 15px;
  font-weight: bold;
  line-height: 32px;
  text-align: center;
}
.sub-row { display: flex; align-items: center; gap: 5px; margin-top: 10px; font-size: 11.500px; font-family: "Open Sans", sans-serif; }
.unsub {
  width: 79px;
  height: 20px;
  padding: 0;
  background: #fff;
  border: 1px solid #ddd;
  border-bottom: 2px solid #ccc;
  border-radius: 2px;
  font: bold 10.500px "Liberation Sans", sans-serif;
  color: #777;
}
.flair-row { display: flex; align-items: flex-start; margin-top: 5px; font-family: "Open Sans", sans-serif; font-size: 10px; line-height: 19px; color: #999; }
.check {
  width: 12px;
  height: 13px;
  margin: 0 8px 0 0;
  flex: none;
  background: #e4e4e4;
  border: 1px solid #999;
  border-radius: 2px;
  font-size: 10px;
  line-height: 11px;
  text-align: center;
  color: #222;
}
.flair-user { display: flex; align-items: center; margin: 1px 0 0 20px; }
.flair-user .edit { margin-left: 7px; font-size: 12px; color: #999; letter-spacing: 1px; }
.edit a { color: #5a90fa; font-family: "Open Sans", sans-serif; font-weight: bold; font-size: 11px; }
.filters { display: grid; grid-template-columns: 122px 122px; gap: 10px 14px; margin: 20px 0 0 6px; }
.filters a { height: 20px; color: #f2f2f2; font-size: 11px; font-weight: bold; line-height: 20px; text-align: center; }
.grey { background: #95a5a6; }
.yellow { background: #f1c40f; }
.redbg { background: #e74c3c; }
.navy { background: #34495e; }
.purple { background: #9b59b6; }
.bluebg { background: #5a90fa; }
.green { background: #66b355; }
.rules-h { margin: 11px 0 0; font-size: 15px; line-height: 18px; }
.rules-p { margin: 5px 0 0; font-size: 14px; line-height: 18px; }
.rules-p a, .rules a { color: #5a90fa; }
.rules { margin: 10px 0 0; padding: 0 0 0 42px; width: 225px; font-size: 14px; line-height: 18px; }
```
